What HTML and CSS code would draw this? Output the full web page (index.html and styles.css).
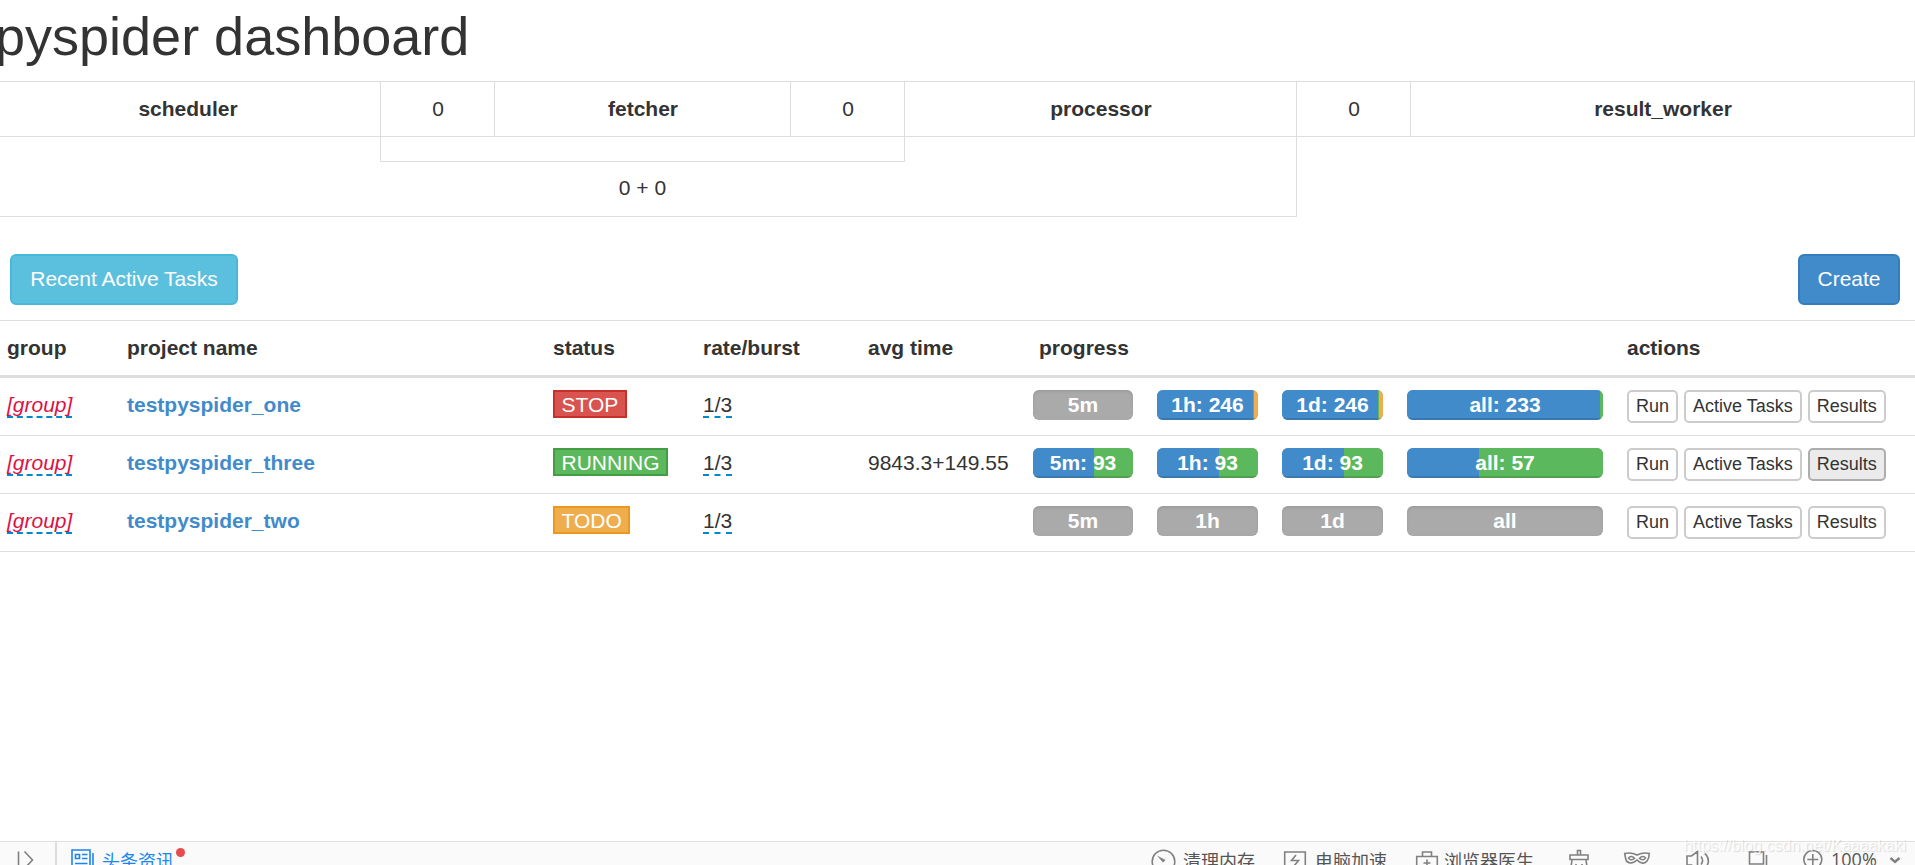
FILE: index.html
```html
<!DOCTYPE html>
<html lang="en">
<head>
    <meta charset="UTF-8">
    <meta name="viewport" content="width=device-width, initial-scale=1.0">
    <title>Dashboard - pyspider</title>
    <link rel="stylesheet" href="styles.css">
</head>
<body>
    <div class="page">
        <h1>pyspider dashboard</h1>

        <table class="queues">
            <colgroup>
                <col class="q-scheduler"><col class="q-num"><col class="q-fetcher"><col class="q-num"><col class="q-processor"><col class="q-num"><col class="q-result">
            </colgroup>
            <tr class="line">
                <th>scheduler</th>
                <td>0</td>
                <th>fetcher</th>
                <td>0</td>
                <th>processor</th>
                <td>0</td>
                <th>result_worker</th>
            </tr>
            <tr class="spacer">
                <td class="r"></td>
                <td class="r b" colspan="3"></td>
                <td class="r"></td>
                <td colspan="2"></td>
            </tr>
            <tr class="total">
                <td class="b"></td>
                <td class="b" colspan="3">0 + 0</td>
                <td class="r b"></td>
                <td colspan="2"></td>
            </tr>
        </table>

        <div class="toolbar">
            <button class="btn btn-info">Recent Active Tasks</button>
            <button class="btn btn-primary">Create</button>
        </div>

        <table class="projects">
            <colgroup>
                <col class="c-group"><col class="c-name"><col class="c-status"><col class="c-rate"><col class="c-time"><col class="c-progress"><col class="c-actions">
            </colgroup>
            <thead>
                <tr>
                    <th>group</th>
                    <th>project name</th>
                    <th>status</th>
                    <th>rate/burst</th>
                    <th>avg time</th>
                    <th>progress</th>
                    <th>actions</th>
                </tr>
            </thead>
            <tbody>
                <tr>
                    <td><span class="editable empty">[group]</span></td>
                    <td><a class="name" href="#">testpyspider_one</a></td>
                    <td><span class="status stop">STOP</span></td>
                    <td><span class="editable">1/3</span></td>
                    <td></td>
                    <td class="progress-cell">
                        <div class="bars">
                            <div class="progress"><span>5m</span></div>
                            <div class="progress">
                                <div class="bar blue" style="width:95.5%"></div><div class="bar green" style="width:1%"></div><div class="bar orange" style="width:3.5%"></div>
                                <span>1h: 246</span>
                            </div>
                            <div class="progress">
                                <div class="bar blue" style="width:95.5%"></div><div class="bar green" style="width:1%"></div><div class="bar orange" style="width:3.5%"></div>
                                <span>1d: 246</span>
                            </div>
                            <div class="progress">
                                <div class="bar blue" style="width:98.5%"></div><div class="bar green" style="width:1.5%"></div>
                                <span>all: 233</span>
                            </div>
                        </div>
                    </td>
                    <td>
                        <div class="actions">
                            <button class="btn-sm">Run</button>
                            <button class="btn-sm">Active Tasks</button>
                            <button class="btn-sm">Results</button>
                        </div>
                    </td>
                </tr>
                <tr>
                    <td><span class="editable empty">[group]</span></td>
                    <td><a class="name" href="#">testpyspider_three</a></td>
                    <td><span class="status running">RUNNING</span></td>
                    <td><span class="editable">1/3</span></td>
                    <td>9843.3+149.55</td>
                    <td class="progress-cell">
                        <div class="bars">
                            <div class="progress">
                                <div class="bar blue" style="width:61%"></div><div class="bar green" style="width:39%"></div>
                                <span>5m: 93</span>
                            </div>
                            <div class="progress">
                                <div class="bar blue" style="width:61%"></div><div class="bar green" style="width:39%"></div>
                                <span>1h: 93</span>
                            </div>
                            <div class="progress">
                                <div class="bar blue" style="width:61%"></div><div class="bar green" style="width:39%"></div>
                                <span>1d: 93</span>
                            </div>
                            <div class="progress">
                                <div class="bar blue" style="width:36.8%"></div><div class="bar green" style="width:63.2%"></div>
                                <span>all: 57</span>
                            </div>
                        </div>
                    </td>
                    <td>
                        <div class="actions">
                            <button class="btn-sm">Run</button>
                            <button class="btn-sm">Active Tasks</button>
                            <button class="btn-sm active">Results</button>
                        </div>
                    </td>
                </tr>
                <tr>
                    <td><span class="editable empty">[group]</span></td>
                    <td><a class="name" href="#">testpyspider_two</a></td>
                    <td><span class="status todo">TODO</span></td>
                    <td><span class="editable">1/3</span></td>
                    <td></td>
                    <td class="progress-cell">
                        <div class="bars">
                            <div class="progress"><span>5m</span></div>
                            <div class="progress"><span>1h</span></div>
                            <div class="progress"><span>1d</span></div>
                            <div class="progress"><span>all</span></div>
                        </div>
                    </td>
                    <td>
                        <div class="actions">
                            <button class="btn-sm">Run</button>
                            <button class="btn-sm">Active Tasks</button>
                            <button class="btn-sm">Results</button>
                        </div>
                    </td>
                </tr>
            </tbody>
        </table>
    </div>

    <div class="statusbar">
        <div class="panel-toggle">
            <svg width="20" height="36" viewBox="0 0 20 36"><path d="M2.5 9.5V27M8.500 9.500L16.500 18L8.500 26.500"/></svg>
        </div>
        <div class="news">
            <svg width="24" height="36" viewBox="0 0 24 36"><path d="M2 8H20V26H2ZM23 11V26H19M5.500 12.500H9.500V16.500H5.500ZM12 12.500H17.500M12 16.500H17.500M5 21.500H17.500"/></svg>
            <span>头条资讯</span>
            <i class="dot"></i>
        </div>
        <div class="tools">
            <svg class="gauge" width="26" height="36" viewBox="0 0 26 36"><circle cx="12.500" cy="19.500" r="11.300"/><path class="fill" d="M6 13.500L14.500 18L12 20.500Z"/></svg>
            <span>清理内存</span>
            <svg class="boost" width="24" height="36" viewBox="0 0 24 36"><path d="M1.700 10H22.300V27H1.700ZM13 13L8.500 18.500H15.500L11 24"/></svg>
            <span>电脑加速</span>
            <svg class="doctor" width="24" height="36" viewBox="0 0 24 36"><path d="M1.700 14.500H22.300V28H1.700ZM7.500 14V10H16.500V14M12 17.500V24.500M8.500 21H15.500"/></svg>
            <span>浏览器医生</span>
            <svg class="broom" width="22" height="36" viewBox="0 0 22 36"><path d="M9.500 13V8.500H12.500V13M2 13H20V17.500H2ZM4 18L2.500 28M18 18L19.500 28M8 22V28M14 22V28"/></svg>
            <svg class="mask" width="28" height="36" viewBox="0 0 28 36"><path d="M1.700 11.500C6 10.500 10 11 14 13C18 11 22 10.500 26.300 11.500C26 18 23 22 19 21C16.500 20.500 15 19 14 18C13 19 11 20.500 8 21C4 21 3 19 2.500 16ZM5.500 16C7 14 10 14 11.500 16.500C9 18.500 6.500 18 5.500 16ZM22.500 16C21 14 18 14 16.500 16.500C19 18.500 21.500 18 22.500 16Z"/></svg>
            <svg class="sound" width="26" height="36" viewBox="0 0 26 36"><path d="M2 14H6.500L12.500 9.500V27L6.500 23H2ZM16 14.500C18 17 18 20 16 22.500M20 11.500C24.500 16 24.500 22 20 26"/></svg>
            <svg class="window" width="20" height="36" viewBox="0 0 20 36"><path d="M1.500 10H15.500V22H1.500ZM18.500 13V28H6"/></svg>
            <svg class="zoom" width="22" height="36" viewBox="0 0 22 36"><circle cx="10.800" cy="17.500" r="9"/><path d="M10.800 12V23M5.300 17.500H16.300"/></svg>
            <span class="percent">100%</span>
            <svg class="caret" width="12" height="36" viewBox="0 0 12 36"><path d="M1.500 16L6 20L10.500 16"/></svg>
        </div>
    </div>
    <div class="watermark">https://blog.csdn.net/Kaaaakaki</div>
</body>
</html>
```
FILE: styles.css
```css
* { box-sizing: border-box; }
body {
    margin: 0;
    height: 100vh;
    overflow: hidden;
    position: relative;
    background: #fff;
    color: #333;
    font-family: "Liberation Sans", Arial, "Noto Sans CJK SC", sans-serif;
    font-size: 21px;
    line-height: 30px;
}
/* page is slightly wider than the window */
.page {
    width: 1920px;
    height: 841px;
    margin-left: -5px;
    padding-top: 6px;
}
h1 {
    margin: 0 0 15px;
    font-size: 54px;
    font-weight: normal;
    line-height: 60px;
}
table {
    width: 100%;
    table-layout: fixed;
    border-collapse: separate;
    border-spacing: 0;
}
th, td { padding: 12px; }

/* queue overview */
.queues { text-align: center; }
.queues td, .queues th { border: 0 solid #ddd; }
.q-scheduler { width: 386px; }
.q-num { width: 114px; }
.q-fetcher { width: 296px; }
.q-processor { width: 392px; }
.q-result { width: 504px; }
.queues .line th, .queues .line td { padding: 11px 12px 12px 13px; border-width: 1px 1px 1px 0; height: 56px; }
.queues .spacer td { height: 25px; padding: 0; }
.queues .total td { height: 55px; padding: 11px 13px 13px 12px; }
.queues .r { border-right-width: 1px; }
.queues .b { border-bottom-width: 1px; }

.toolbar {
    display: flex;
    justify-content: space-between;
    padding: 37px 15px 15px;
}
.btn {
    height: 51px;
    padding: 0 17.5px 1px;
    border: 2px solid;
    border-radius: 6px;
    color: #fff;
    font: inherit;
}
.btn-info { width: 228px; background: #5bc0de; border-color: #46b8da; }
.btn-primary { background: #428bca; border-color: #357ebd; }

/* project list */
.projects { text-align: left; }
.projects th { border-top: 1px solid #ddd; border-bottom: 3px solid #ddd; }
.projects td {
    height: 58px;
    padding-bottom: 0;
    border-bottom: 1px solid #ddd;
    vertical-align: top;
}
.c-group { width: 120px; }
.c-name { width: 426px; }
.c-status { width: 150px; }
.c-rate { width: 165px; }
.c-time { width: 171px; }
.c-progress { width: 588px; }
.c-actions { width: 300px; }
.name { color: #428bca; font-weight: bold; text-decoration: none; }
.editable {
    display: inline-block;
    height: 28px;
    border-bottom: 2px dashed #08c;
    vertical-align: top;
}
.empty { color: #d14; font-style: italic; }
.status {
    display: inline-block;
    height: 28px;
    padding: 0 6.5px;
    border: 2px solid;
    color: #fff;
    line-height: 25px;
    vertical-align: top;
}
.stop { background: #d9534f; border-color: #c9302c; }
.running { background: #5cb85c; border-color: #449d44; }
.todo { background: #f0ad4e; border-color: #ec971f; }

.projects .progress-cell { padding-left: 6px; }
.bars {
    display: grid;
    grid-template-columns: 100px 101px 101px 196px;
    column-gap: 24px;
}
.progress {
    position: relative;
    display: flex;
    height: 30px;
    border-radius: 6px;
    overflow: hidden;
    background: #aaa;
    box-shadow: inset 0 1.5px 3px rgba(0, 0, 0, .1);
}
.progress span {
    position: absolute;
    inset: 0;
    color: #fff;
    font-weight: bold;
    text-align: center;
}
.bar { box-shadow: inset 0 -2px 0 rgba(0, 0, 0, .13); }
.blue { background: #428bca; }
.green { background: #5cb85c; }
.orange { background: #f0ad4e; }

.actions { display: flex; gap: 6px; }
.btn-sm {
    height: 33px;
    padding: 0 7px 1px;
    background: #fff;
    border: 2px solid #ccc;
    border-radius: 5px;
    color: #333;
    font-family: inherit;
    font-size: 18px;
    line-height: 27px;
    white-space: nowrap;
}
.btn-sm.active { background: #ebebeb; border-color: #adadad; }

/* browser status bar, cut by the bottom of the window */
.statusbar {
    display: flex;
    height: 24px;
    overflow: hidden;
    background: #fafafa;
    border-top: 1px solid #e1e1e1;
    color: #555;
    font-size: 18px;
    line-height: 36px;
    white-space: nowrap;
}
.statusbar svg {
    flex: none;
    fill: none;
    stroke: #808080;
    stroke-width: 1.6;
}
.statusbar span { font-family: "Noto Sans CJK SC", sans-serif; }
.statusbar .fill { fill: #808080; stroke: none; }
.panel-toggle { width: 57px; padding-left: 16px; border-right: 2px solid #ddd; }
.news { display: flex; padding-left: 13px; color: #1a87f0; }
.statusbar .news svg { stroke: #1a87f0; }
.news span { margin-left: 8px; }
.dot {
    width: 9px;
    height: 9px;
    margin: 6px 0 0 2px;
    border-radius: 50%;
    background: #e84b4b;
}
.tools { display: flex; margin-left: auto; padding-right: 14px; }
.gauge + span { margin-left: 6px; }
.boost { margin-left: 28px; }
.boost + span { margin-left: 8px; }
.doctor { margin-left: 28px; }
.doctor + span { margin-left: 5px; }
.broom { margin-left: 34px; }
.mask { margin-left: 33px; }
.sound { margin-left: 34px; }
.window { margin-left: 37px; }
.zoom { margin-left: 34px; }
.statusbar .percent { width: 47px; margin-left: 7px; font-family: "Open Sans", sans-serif; line-height: 34px; }
.caret { margin-left: 11px; }
.statusbar .caret { stroke-width: 2.4; }

.watermark {
    position: absolute;
    right: 9px;
    bottom: 8px;
    color: rgba(255, 255, 255, .8);
    font-size: 16px;
    line-height: 22px;
    text-shadow: 1px 1px 1px rgba(0, 0, 0, .13);
}
```
